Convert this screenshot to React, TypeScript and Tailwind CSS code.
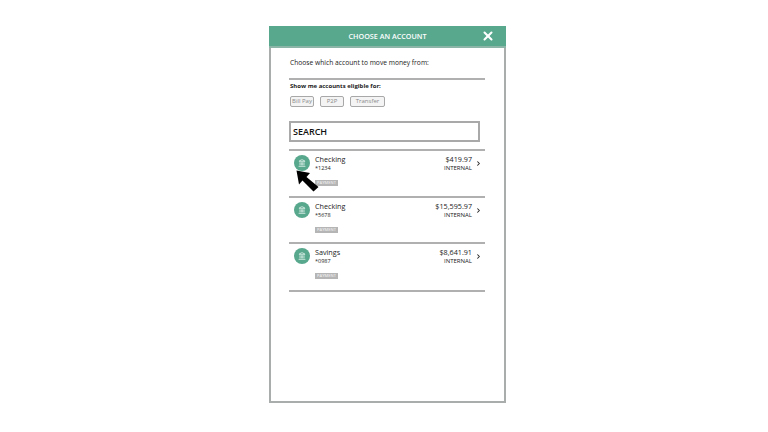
import { Landmark, ChevronRight, X } from "lucide-react";

const accounts = [
  { name: "Checking", num: "*1234", amount: "$419.97", rowH: "h-[47px]" },
  { name: "Checking", num: "*5678", amount: "$15,595.97", rowH: "h-[46px]" },
  { name: "Savings", num: "*0987", amount: "$8,641.91", rowH: "h-[48px]" },
];

function Chip({ label, className }: { label: string; className: string }) {
  return (
    <div className={`h-[11px] flex items-center justify-center whitespace-nowrap rounded-[2px] border border-[#a8a8a8] bg-[#f4f4f4] text-[6px] text-[#8a8a8a] ${className}`}>
      {label}
    </div>
  );
}

export default function App() {
  return (
    <div className="relative w-[768px] h-[432px] overflow-hidden bg-white pt-[26px] pl-[269px] font-['Open_Sans',sans-serif]">
      <div className="relative w-[237px] h-[377px] flex flex-col border-2 border-t-0 border-[#a9aeac] bg-white">
        <div className="-mx-[2px] h-[22px] shrink-0 flex items-center justify-center bg-[#58a88e] border-b-2 border-[#8bb5a6] text-[7.2px] font-semibold text-white">
          CHOOSE AN ACCOUNT
          <X className="absolute right-[9px] top-[3px] w-[14px] h-[14px] text-white" strokeWidth={3.5} />
        </div>

        <div className="flex flex-col pl-[18px] w-[214px]">
          <p className="mt-[9px] ml-[1px] text-[6.7px] leading-[12px] text-[#222]">Choose which account to move money from:</p>
          <div className="mt-[9px] h-[2px] bg-[#b0b0b0]" />
          <p className="mt-[1px] ml-[1px] text-[6px] leading-[10px] font-bold text-[#222]">Show me accounts eligible for:</p>
          <div className="mt-[5px] ml-[1px] flex gap-[6px]">
            <Chip label="Bill Pay" className="w-[24px]" />
            <Chip label="P2P" className="w-[24px]" />
            <Chip label="Transfer" className="w-[35px]" />
          </div>

          <div className="mt-[14px] w-[191px] h-[21px] flex items-center pl-[2px] border-2 border-[#a9a9a9] text-[9px] font-semibold text-[#111]">
            SEARCH
          </div>
          <div className="mt-[7px] h-[2px] bg-[#b0b0b0]" />

          {accounts.map((a) => (
            <div key={a.num} className={`${a.rowH} relative flex border-b-2 border-[#b0b0b0]`}>
              <div className="ml-[5px] mt-[4px] w-[16px] h-[16px] shrink-0 rounded-full bg-[#58a88e] flex items-center justify-center">
                <Landmark className="w-[8px] h-[8px] text-white" strokeWidth={2} />
              </div>
              <div className="ml-[5px] flex flex-col items-start">
                <span className="mt-[2px] text-[7.2px] leading-[12px] text-[#222]">{a.name}</span>
                <span className="text-[5.5px] leading-[7px] text-[#222]">{a.num}</span>
                <span className="mt-[8px] w-[23px] h-[6px] flex items-center justify-center whitespace-nowrap bg-[#b5b5b5] text-[4px] leading-[6px] font-semibold text-[#eee]">
                  PAYMENT
                </span>
              </div>
              <div className="ml-auto mr-[13px] flex flex-col items-end">
                <span className="mt-[2px] text-[7.2px] leading-[12px] text-[#222]">{a.amount}</span>
                <span className="text-[6px] leading-[7px] text-[#222]">INTERNAL</span>
              </div>
              <ChevronRight className="absolute right-[3px] top-[9px] w-[7px] h-[7px] text-[#222]" strokeWidth={3.5} />
            </div>
          ))}
        </div>
      </div>

      {/* pointer arrow drawn over the first row */}
      <svg className="absolute left-[296px] top-[170px] w-[23px] h-[22px]" viewBox="0 0 23 22">
        <path d="M0.5 0.5 L14 3 L10.5 7 L22.5 17 L17.5 21.5 L6.5 10.5 L3 14.5 Z" fill="#000" />
      </svg>
    </div>
  );
}
